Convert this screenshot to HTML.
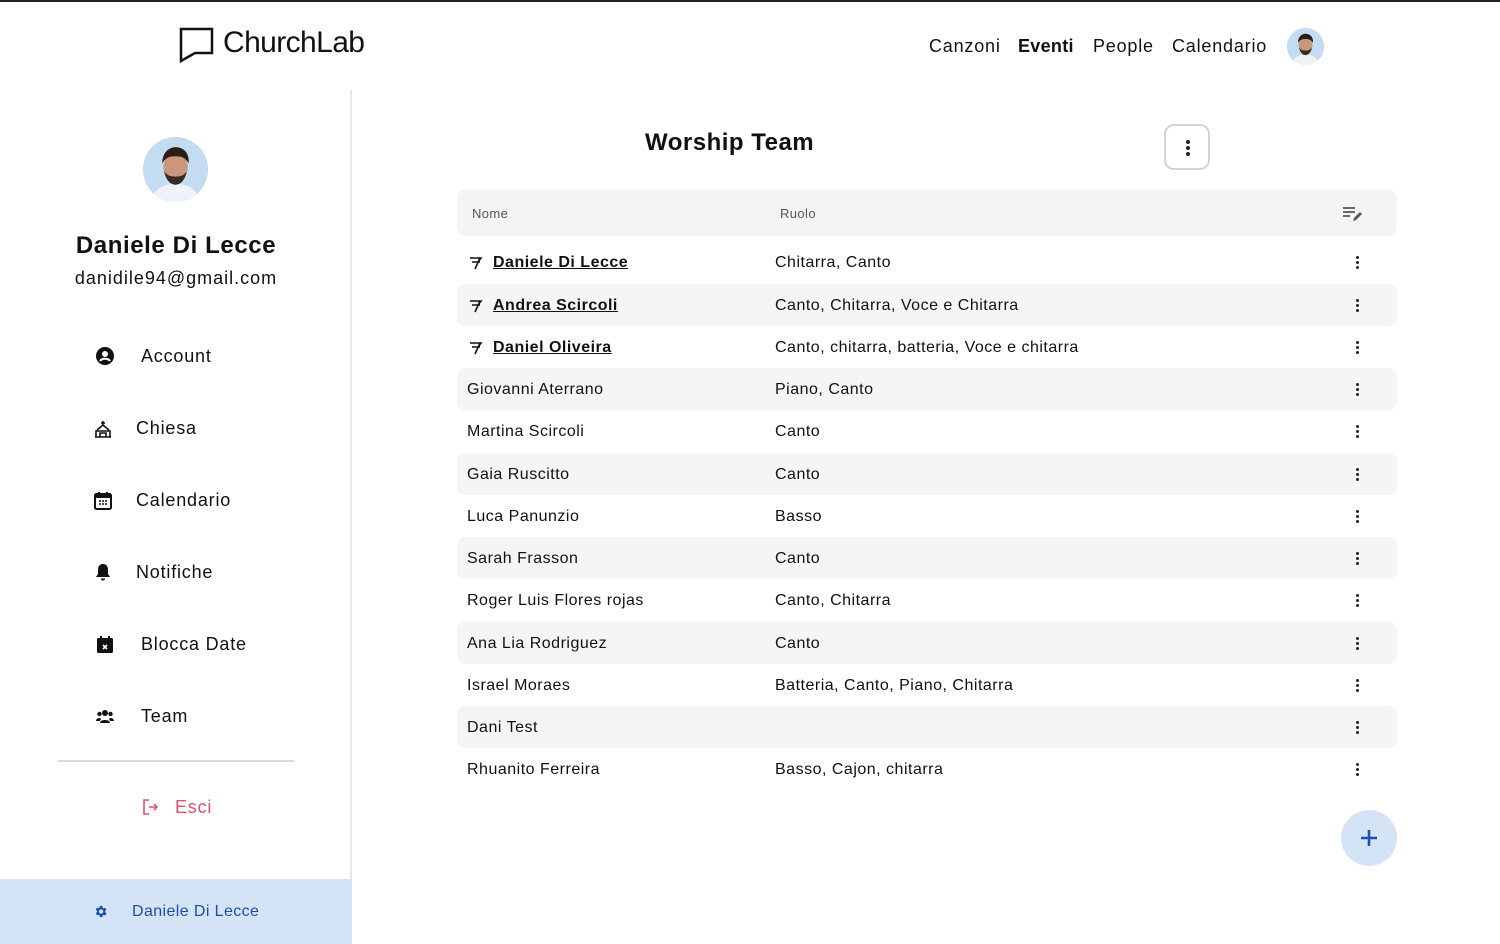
<!DOCTYPE html>
<html><head><meta charset="utf-8"><style>
*{margin:0;padding:0;box-sizing:border-box}
body{width:1500px;height:944px;overflow:hidden;background:#fff;font-family:"Liberation Sans",sans-serif;color:#111;position:relative}
.top{position:absolute;left:0;top:0;width:1500px;height:2px;background:#222}
.logo{position:absolute;left:179px;top:27px;display:flex;align-items:center}
.logo span{font-size:30px;letter-spacing:-0.6px;margin-left:8px;margin-top:-4px}
.nav{position:absolute;top:36px;font-size:18px;letter-spacing:0.8px}
.av{position:absolute;border-radius:50%;overflow:hidden;background:#bcd6f0}
.av svg{width:100%;height:100%;display:block}
.side{position:absolute;left:0;top:90px;width:352px;height:854px;border-right:2px solid #e8e8e8}
.menu{position:absolute;font-size:18px;display:flex;align-items:center;letter-spacing:0.8px}
.bot{position:absolute;left:0;top:879px;width:352px;height:65px;background:#d5e3f7;color:#1e4fa8;font-size:16px;letter-spacing:0.4px}
.row{position:absolute;left:457px;width:940px;height:42px;font-size:16px;border-radius:8px;letter-spacing:0.5px}
.row.g{background:#f5f5f5}
.row .n{position:absolute;left:10px;top:13px}
.row .r{position:absolute;left:318px;top:13px}
.row .d{position:absolute;left:899px;top:15px;width:3px}
.row .d i,.kb i{display:block;width:3px;height:3px;background:#222;border-radius:50%;margin-bottom:2px}
.row a{color:#111;font-weight:bold;text-decoration:underline;margin-left:26px}
.flag{position:absolute;left:12px;top:15px}
</style></head><body>
<div class="top"></div>
<div class="logo"><svg width="36" height="36" viewBox="0 0 36 36"><path d="M2 2H33V26H16L2 34Z" fill="none" stroke="#111" stroke-width="2.5"/></svg><span>ChurchLab</span></div>
<div class="nav" style="left:929px">Canzoni</div>
<div class="nav" style="left:1018px;font-weight:bold;letter-spacing:0.3px">Eventi</div>
<div class="nav" style="left:1093px">People</div>
<div class="nav" style="left:1172px">Calendario</div>
<div class="av" style="left:1287px;top:28px;width:37px;height:37px"><svg viewBox="0 0 64 64"><rect width="64" height="64" fill="#c4dcf2"/><path d="M8 64c2-14 14-18 24-18s22 4 24 18z" fill="#eef3f8"/><ellipse cx="32" cy="30" rx="12" ry="15" fill="#c9977a"/><path d="M19 26c0-12 8-16 13-16s14 3 13 16c-3-5-6-7-13-7s-10 2-13 7z" fill="#2a1e18"/><path d="M21 34c2 10 7 13 11 13s9-3 11-13c-3 4-6 5-11 5s-8-1-11-5z" fill="#3a2a22"/></svg></div>

<div class="side"></div>
<div class="av" style="left:143px;top:137px;width:65px;height:65px"><svg viewBox="0 0 64 64"><rect width="64" height="64" fill="#c4dcf2"/><path d="M8 64c2-14 14-18 24-18s22 4 24 18z" fill="#eef3f8"/><ellipse cx="32" cy="30" rx="12" ry="15" fill="#c9977a"/><path d="M19 26c0-12 8-16 13-16s14 3 13 16c-3-5-6-7-13-7s-10 2-13 7z" fill="#2a1e18"/><path d="M21 34c2 10 7 13 11 13s9-3 11-13c-3 4-6 5-11 5s-8-1-11-5z" fill="#3a2a22"/></svg></div>
<div style="position:absolute;left:0;width:352px;top:232px;text-align:center;font-size:24px;font-weight:bold;letter-spacing:0.6px">Daniele Di Lecce</div>
<div style="position:absolute;left:0;width:352px;top:268px;text-align:center;font-size:18px;letter-spacing:1px">danidile94@gmail.com</div>

<div class="menu" style="left:141px;top:346px">Account</div>
<svg style="position:absolute;left:96px;top:347px" width="18" height="18" viewBox="0 0 18 18"><circle cx="9" cy="9" r="9" fill="#111"/><circle cx="9" cy="7" r="3" fill="#fff"/><path d="M4 14c2-3 8-3 10 0" stroke="#fff" stroke-width="2" fill="none"/></svg>
<div class="menu" style="left:136px;top:418px">Chiesa</div>
<svg style="position:absolute;left:94px;top:420px" width="18" height="18" viewBox="0 0 18 18"><path d="M9 1v4M7 3h4M3 10l6-5 6 5M1 17h16M2 17v-6h14v6M6 17v-4h6v4" stroke="#111" stroke-width="1.6" fill="none"/></svg>
<div class="menu" style="left:136px;top:490px">Calendario</div>
<svg style="position:absolute;left:94px;top:491px" width="18" height="19" viewBox="0 0 18 19"><rect x="1" y="3" width="16" height="15" rx="1.5" fill="none" stroke="#111" stroke-width="2"/><rect x="1" y="3" width="16" height="4" fill="#111"/><path d="M5 1v4M13 1v4" stroke="#111" stroke-width="2"/><path d="M5 10h2M8 10h2M11 10h2M5 13h2M8 13h2M11 13h2" stroke="#111" stroke-width="1.5"/></svg>
<div class="menu" style="left:136px;top:562px">Notifiche</div>
<svg style="position:absolute;left:95px;top:563px" width="16" height="18" viewBox="0 0 16 18"><path d="M8 1c3.5 0 5 2.5 5 6v4l2 3H1l2-3V7c0-3.5 1.5-6 5-6z" fill="#111"/><path d="M6 15.5a2 2 0 0 0 4 0z" fill="#111"/></svg>
<div class="menu" style="left:141px;top:634px">Blocca Date</div>
<svg style="position:absolute;left:96px;top:635px" width="18" height="19" viewBox="0 0 18 19"><rect x="1" y="3" width="16" height="15" rx="1.5" fill="#111"/><path d="M5 1v4M13 1v4" stroke="#111" stroke-width="2"/><path d="M7 10l4 4M11 10l-4 4" stroke="#fff" stroke-width="1.6"/></svg>
<div class="menu" style="left:141px;top:706px">Team</div>
<svg style="position:absolute;left:96px;top:709px" width="18" height="14" viewBox="0 0 18 14"><circle cx="9" cy="4" r="3" fill="#111"/><circle cx="3.5" cy="5" r="2.2" fill="#111"/><circle cx="14.5" cy="5" r="2.2" fill="#111"/><path d="M4 14c0-4 10-4 10 0zM0 12c0-3 4-4 5-2l-1 2zM18 12c0-3-4-4-5-2l1 2z" fill="#111"/></svg>
<div style="position:absolute;left:58px;top:760px;width:236px;height:2px;background:#ddd"></div>
<svg style="position:absolute;left:143px;top:799px" width="16" height="16" viewBox="0 0 16 16"><path d="M6 1H1v14h5M6 8h8M11 5l3 3-3 3" stroke="#d9536a" stroke-width="1.6" fill="none"/></svg>
<div style="position:absolute;left:175px;top:797px;font-size:18px;color:#d9536a;letter-spacing:0.8px">Esci</div>
<div class="bot"><svg style="position:absolute;left:93px;top:25px" width="15" height="15" viewBox="0 0 24 24"><path fill="#1e4fa8" d="M19.4 13a7.5 7.5 0 0 0 0-2l2.1-1.6-2-3.5-2.5 1a7.6 7.6 0 0 0-1.7-1L15 3h-4l-.4 2.6a7.6 7.6 0 0 0-1.7 1l-2.5-1-2 3.5L6.6 11a7.5 7.5 0 0 0 0 2l-2.1 1.6 2 3.5 2.5-1a7.6 7.6 0 0 0 1.7 1L11 21h4l.4-2.6a7.6 7.6 0 0 0 1.7-1l2.5 1 2-3.5zM13 15.5a3.5 3.5 0 1 1 0-7 3.5 3.5 0 0 1 0 7z"/></svg><span style="position:absolute;left:132px;top:24px">Daniele Di Lecce</span></div>

<div style="position:absolute;left:645px;top:129px;font-size:24px;font-weight:bold;letter-spacing:0.5px">Worship Team</div>
<div class="kb" style="position:absolute;left:1164px;top:124px;width:46px;height:46px;border:2px solid #d4d4d4;border-radius:10px;padding:14px 0 0 20px"><i style="width:4px;height:4px"></i><i style="width:4px;height:4px"></i><i style="width:4px;height:4px"></i></div>
<div style="position:absolute;left:457px;top:189px;width:940px;height:47px;background:#f4f4f4;border-radius:10px;font-size:13px;color:#555;letter-spacing:0.4px">
<span style="position:absolute;left:15px;top:17px">Nome</span><span style="position:absolute;left:323px;top:17px">Ruolo</span>
<svg style="position:absolute;left:886px;top:17px" width="20" height="16" viewBox="0 0 20 16"><path d="M0 2h12M0 6h12M0 10h7" stroke="#555" stroke-width="1.8"/><path d="M10 15l1-3 6-6 2 2-6 6z" fill="#555"/></svg></div>

<div class="row" style="top:241px"><svg class="flag" width="14" height="14" viewBox="0 0 14 14"><path d="M1 2h11l-3 4 2 0M3 6h8M6 13l5-11" stroke="#111" stroke-width="1.6" fill="none"/></svg><span class="n"><a>Daniele Di Lecce</a></span><span class="r">Chitarra, Canto</span><span class="d"><i></i><i></i><i></i></span></div>
<div class="row g" style="top:284px"><svg class="flag" width="14" height="14" viewBox="0 0 14 14"><path d="M1 2h11l-3 4 2 0M3 6h8M6 13l5-11" stroke="#111" stroke-width="1.6" fill="none"/></svg><span class="n"><a>Andrea Scircoli</a></span><span class="r">Canto, Chitarra, Voce e Chitarra</span><span class="d"><i></i><i></i><i></i></span></div>
<div class="row" style="top:326px"><svg class="flag" width="14" height="14" viewBox="0 0 14 14"><path d="M1 2h11l-3 4 2 0M3 6h8M6 13l5-11" stroke="#111" stroke-width="1.6" fill="none"/></svg><span class="n"><a>Daniel Oliveira</a></span><span class="r">Canto, chitarra, batteria, Voce e chitarra</span><span class="d"><i></i><i></i><i></i></span></div>
<div class="row g" style="top:368px"><span class="n">Giovanni Aterrano</span><span class="r">Piano, Canto</span><span class="d"><i></i><i></i><i></i></span></div>
<div class="row" style="top:410px"><span class="n">Martina Scircoli</span><span class="r">Canto</span><span class="d"><i></i><i></i><i></i></span></div>
<div class="row g" style="top:453px"><span class="n">Gaia Ruscitto</span><span class="r">Canto</span><span class="d"><i></i><i></i><i></i></span></div>
<div class="row" style="top:495px"><span class="n">Luca Panunzio</span><span class="r">Basso</span><span class="d"><i></i><i></i><i></i></span></div>
<div class="row g" style="top:537px"><span class="n">Sarah Frasson</span><span class="r">Canto</span><span class="d"><i></i><i></i><i></i></span></div>
<div class="row" style="top:579px"><span class="n">Roger Luis Flores rojas</span><span class="r">Canto, Chitarra</span><span class="d"><i></i><i></i><i></i></span></div>
<div class="row g" style="top:622px"><span class="n">Ana Lia Rodriguez</span><span class="r">Canto</span><span class="d"><i></i><i></i><i></i></span></div>
<div class="row" style="top:664px"><span class="n">Israel Moraes</span><span class="r">Batteria, Canto, Piano, Chitarra</span><span class="d"><i></i><i></i><i></i></span></div>
<div class="row g" style="top:706px"><span class="n">Dani Test</span><span class="r"></span><span class="d"><i></i><i></i><i></i></span></div>
<div class="row" style="top:748px"><span class="n">Rhuanito Ferreira</span><span class="r">Basso, Cajon, chitarra</span><span class="d"><i></i><i></i><i></i></span></div>

<div style="position:absolute;left:1341px;top:810px;width:56px;height:56px;border-radius:50%;background:#d5e3f7"><svg style="position:absolute;left:19px;top:19px" width="18" height="18" viewBox="0 0 18 18"><path d="M9 1v16M1 9h16" stroke="#1e4fa8" stroke-width="2.6"/></svg></div>
</body></html>
